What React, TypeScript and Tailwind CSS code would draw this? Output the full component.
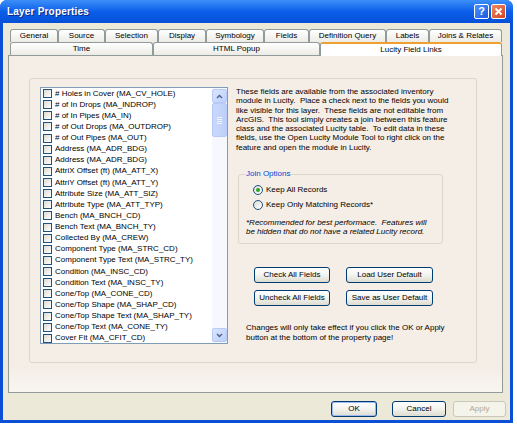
import React from "react";

const FONT = { fontFamily: '"Liberation Sans", Arial, sans-serif' };

const fields = [
  "# Holes in Cover (MA_CV_HOLE)",
  "# of In Drops (MA_INDROP)",
  "# of In Pipes (MA_IN)",
  "# of Out Drops (MA_OUTDROP)",
  "# of Out Pipes (MA_OUT)",
  "Address (MA_ADR_BDG)",
  "Address (MA_ADR_BDG)",
  "AttriX Offset (ft) (MA_ATT_X)",
  "AttriY Offset (ft) (MA_ATT_Y)",
  "Attribute Size (MA_ATT_SIZ)",
  "Attribute Type (MA_ATT_TYP)",
  "Bench (MA_BNCH_CD)",
  "Bench Text (MA_BNCH_TY)",
  "Collected By (MA_CREW)",
  "Component Type (MA_STRC_CD)",
  "Component Type Text (MA_STRC_TY)",
  "Condition (MA_INSC_CD)",
  "Condition Text (MA_INSC_TY)",
  "Cone/Top (MA_CONE_CD)",
  "Cone/Top Shape (MA_SHAP_CD)",
  "Cone/Top Shape Text (MA_SHAP_TY)",
  "Cone/Top Text (MA_CONE_TY)",
  "Cover Fit (MA_CFIT_CD)",
];

const topTabs: [string, string][] = [
  ["General", "w-[48px]"],
  ["Source", "w-[47px]"],
  ["Selection", "w-[53px]"],
  ["Display", "w-[48px]"],
  ["Symbology", "w-[58px]"],
  ["Fields", "w-[45px]"],
  ["Definition Query", "w-[77px]"],
  ["Labels", "w-[43px]"],
  ["Joins & Relates", "w-[73px]"],
];

function Tab({ label, width }: { label: string; width: string }) {
  return (
    <div
      className={`${width} h-[13px] shrink-0 flex items-center justify-center rounded-t-[3px] border border-b-0 border-[#919b9c] bg-gradient-to-b from-white to-[#ecebe5] text-[8px] text-black`}
    >
      {label}
    </div>
  );
}

function Checkbox() {
  return <span className="w-[9px] h-[9px] shrink-0 border border-[#1c5180] bg-gradient-to-br from-[#dcdbd3] to-white" />;
}

function Radio({ checked }: { checked?: boolean }) {
  return (
    <span className="w-[10px] h-[10px] shrink-0 rounded-full border border-[#1c5180] bg-gradient-to-br from-[#dcdbd3] to-white flex items-center justify-center">
      {checked && <span className="w-[4px] h-[4px] rounded-full bg-[#2aa82a]" />}
    </span>
  );
}

function XpButton({ label, className = "", disabled, isDefault }: { label: string; className?: string; disabled?: boolean; isDefault?: boolean }) {
  return (
    <div
      className={`${className} h-[16px] flex items-center justify-center rounded-[3px] border text-[8px] ${
        disabled
          ? "border-[#c9c7ba] bg-[#f5f4ea] text-[#aca899]"
          : "border-[#003c74] bg-gradient-to-b from-white via-[#f3f3ef] to-[#dedcd0] text-black"
      } ${isDefault ? "shadow-[inset_0_0_0_1px_#9dbbf3]" : ""}`}
    >
      {label}
    </div>
  );
}

function ScrollArrow({ down }: { down?: boolean }) {
  return (
    <div className="h-[14px] rounded-[2px] border border-[#b7c9f6] bg-gradient-to-br from-[#dbe6fe] to-[#bccffa] flex items-center justify-center">
      <svg width="7" height="5" viewBox="0 0 7 5">
        <path d={down ? "M1 1 L3.5 3.5 L6 1" : "M1 4 L3.5 1.5 L6 4"} fill="none" stroke="#4d6185" strokeWidth="1.4" />
      </svg>
    </div>
  );
}

function FieldList() {
  return (
    <div className="w-[188px] h-[257px] shrink-0 flex border border-[#7f9db9] bg-white">
      <div className="flex-1 flex flex-col overflow-hidden pl-[2px]">
        {fields.map((f, i) => (
          <div key={i} className="h-[11.14px] shrink-0 flex items-center gap-[3px] text-[8px] text-black whitespace-nowrap">
            <Checkbox />
            <span>{f}</span>
          </div>
        ))}
      </div>
      <div className="w-[15px] flex flex-col bg-[#f6f8fd] pt-px pb-px">
        <ScrollArrow />
        <div className="h-[34px] rounded-[2px] border border-[#b7c9f6] bg-gradient-to-r from-[#cad8fc] to-[#bdcffa] flex flex-col items-center justify-center gap-[1px]">
          <span className="w-[5px] h-px bg-[#eef3fe]" />
          <span className="w-[5px] h-px bg-[#eef3fe]" />
          <span className="w-[5px] h-px bg-[#eef3fe]" />
          <span className="w-[5px] h-px bg-[#eef3fe]" />
        </div>
        <div className="flex-1" />
        <ScrollArrow down />
      </div>
    </div>
  );
}

export default function App() {
  return (
    <div className="w-[517px] h-[426px] bg-white" style={FONT}>
      <div className="w-[513px] h-[423px] flex flex-col rounded-t-[7px] bg-[#0a4fd6] overflow-hidden">
        {/* title bar */}
        <div className="h-[23px] shrink-0 flex items-center justify-between px-[7px] bg-gradient-to-b from-[#3c8ff8] via-[#0a5ee9] to-[#0650d8]">
          <span className="text-[10px] font-bold text-white tracking-[0.2px] [text-shadow:1px_1px_0_#0a2a8a]">Layer Properties</span>
          <div className="flex gap-[2px]">
            <div className="w-[15px] h-[15px] rounded-[2px] border border-white bg-gradient-to-br from-[#4c94ff] to-[#1a58e0] flex items-center justify-center text-[11px] font-bold text-white leading-none">
              ?
            </div>
            <div className="w-[15px] h-[15px] rounded-[2px] border border-white bg-gradient-to-br from-[#ef8a62] to-[#d2411c] flex items-center justify-center">
              <svg width="9" height="9" viewBox="0 0 9 9">
                <path d="M1.5 1.5 L7.5 7.5 M7.5 1.5 L1.5 7.5" stroke="white" strokeWidth="1.8" />
              </svg>
            </div>
          </div>
        </div>

        {/* body */}
        <div className="flex-1 mx-[3px] mb-[3px] bg-[#ece9d8] flex flex-col">
          <div className="ml-[7px] mt-[6px] w-[492px] flex flex-col">
            <div className="flex">
              {topTabs.map(([l, w]) => (
                <Tab key={l} label={l} width={w} />
              ))}
            </div>
            <div className="flex items-end">
              <Tab label="Time" width="w-[143px]" />
              <Tab label="HTML Popup" width="w-[167px]" />
              <div className="relative z-10 w-[182px] h-[14px] -mb-px flex items-center justify-center rounded-t-[3px] border border-b-0 border-[#919b9c] border-t-2 border-t-[#f0a030] bg-white text-[8px] text-black">
                Lucity Field Links
              </div>
            </div>
          </div>

          {/* property page */}
          <div className="ml-[5px] w-[495px] h-[338px] border border-[#919b9c] bg-gradient-to-b from-[#f5eee7] via-[#f5eee7] via-[93%] to-[#f8f6f1] flex flex-col">
            <div className="ml-[20px] mt-[22px] w-[448px] h-[285px] rounded-[3px] border border-[#dcd6ca] flex pl-[10px] pt-[8px] gap-[8px]">
              <FieldList />

              <div className="flex flex-col text-[8px] text-black">
                <p className="leading-[9.3px] whitespace-nowrap">
                  These fields are available from the associated inventory
                  <br />
                  module in Lucity.&nbsp; Place a check next to the fields you would
                  <br />
                  like visible for this layer.&nbsp; These fields are not editable from
                  <br />
                  ArcGIS.&nbsp; This tool simply creates a join between this feature
                  <br />
                  class and the associated Lucity table.&nbsp; To edit data in these
                  <br />
                  fields, use the Open Lucity Module Tool to right click on the
                  <br />
                  feature and open the module in Lucity.
                </p>

                <div className="relative ml-[2px] mt-[22px] w-[205px] h-[70px] rounded-[3px] border border-[#dcd6ca] flex flex-col pt-[9px]">
                  <span className="absolute -top-[6px] left-[6px] px-[1px] bg-[#f5eee7] text-[#0046d5] leading-[10px]">Join Options</span>
                  <div className="pl-[14px] h-[11px] flex items-center gap-[3px]">
                    <Radio checked />
                    <span>Keep All Records</span>
                  </div>
                  <div className="pl-[14px] mt-[4px] h-[11px] flex items-center gap-[3px]">
                    <Radio />
                    <span>Keep Only Matching Records*</span>
                  </div>
                  <p className="pl-[7px] mt-[8px] italic leading-[9.3px] whitespace-nowrap">
                    *Recommended for best performace.&nbsp; Features will
                    <br />
                    be hidden that do not have a related Lucity record.
                  </p>
                </div>

                <div className="ml-[18px] mt-[23px] grid grid-cols-[76px_87px] gap-x-[16px] gap-y-[7px]">
                  <XpButton label="Check All Fields" />
                  <XpButton label="Load User Default" />
                  <XpButton label="Uncheck All Fields" />
                  <XpButton label="Save as User Default" />
                </div>

                <p className="ml-[10px] mt-[17px] leading-[10px] whitespace-nowrap">
                  Changes will only take effect if you click the OK or Apply
                  <br />
                  button at the bottom of the property page!
                </p>
              </div>
            </div>
          </div>

          {/* dialog buttons */}
          <div className="mt-[8px] flex justify-end pr-[4px]">
            <XpButton label="OK" className="w-[46px]" isDefault />
            <XpButton label="Cancel" className="ml-[15px] w-[54px]" />
            <XpButton label="Apply" className="ml-[7px] w-[53px]" disabled />
          </div>
        </div>
      </div>
    </div>
  );
}
